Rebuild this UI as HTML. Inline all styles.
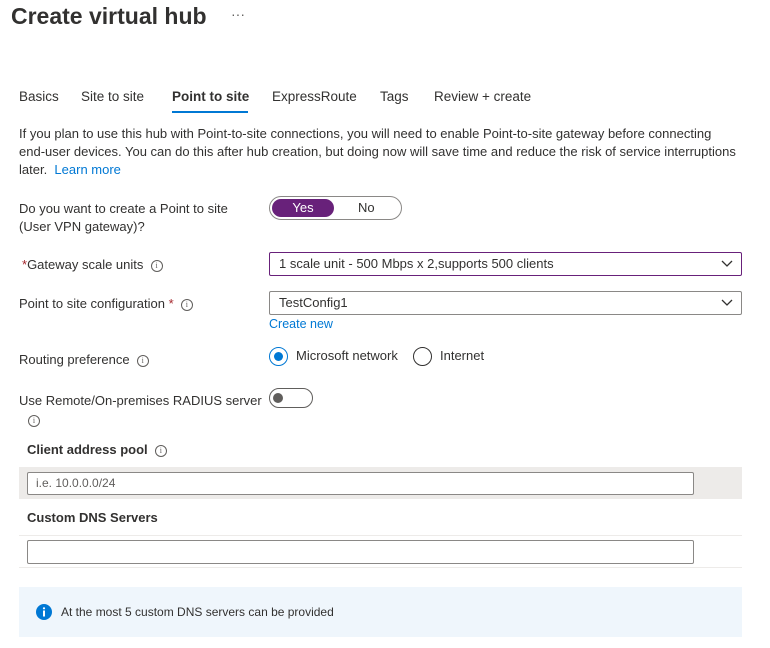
<!DOCTYPE html>
<html><head><style>
*{box-sizing:border-box;margin:0;padding:0}
body{width:770px;height:648px;background:#fff;font-family:"Segoe UI","Liberation Sans",sans-serif;color:#323130;font-size:13px;position:relative;overflow:hidden}
.a{position:absolute;white-space:nowrap}
.info{display:inline-block;width:12px;height:12px;border:1px solid #605e5c;border-radius:50%;font-size:8px;line-height:10px;text-align:center;color:#605e5c;font-family:"Liberation Serif",serif;vertical-align:middle}
.sel{position:absolute;border:1px solid #8a8886;height:24px;border-radius:2px;padding:0 9px;line-height:22px;font-size:13px}
.chev{position:absolute;right:8px;top:7px}
</style></head><body>
<div class="a" style="left:11px;top:3px;font-size:23px;font-weight:600;color:#323130">Create virtual hub</div>
<div class="a" style="left:231px;top:6px;font-size:14px;color:#605e5c">···</div>

<div class="a" style="left:19px;top:89px;font-size:13.5px">Basics</div>
<div class="a" style="left:81px;top:89px;font-size:13.5px">Site to site</div>
<div class="a" style="left:172px;top:89px;font-size:13.5px;font-weight:600">Point to site</div>
<div class="a" style="left:172px;top:111px;width:76px;height:2px;background:#0078d4"></div>
<div class="a" style="left:272px;top:89px;font-size:13.5px">ExpressRoute</div>
<div class="a" style="left:380px;top:89px;font-size:13.5px">Tags</div>
<div class="a" style="left:434px;top:89px;font-size:13.5px">Review + create</div>

<div class="a" style="left:19px;top:125px;font-size:13px;line-height:18px;white-space:normal;width:725px">If you plan to use this hub with Point-to-site connections, you will need to enable Point-to-site gateway before connecting end&#8209;user devices. You can do this after hub creation, but doing now will save time and reduce the risk of service interruptions later. &nbsp;<span style="color:#0078d4">Learn more</span></div>

<div class="a" style="left:19px;top:200px;line-height:18px">Do you want to create a Point to site<br>(User VPN gateway)?</div>
<div class="a" style="left:269px;top:196px;width:133px;height:24px;border:1px solid #8a8886;border-radius:12px"></div>
<div class="a" style="left:272px;top:199px;width:62px;height:18px;border-radius:9px;background:#68217a;color:#fff;text-align:center;line-height:18px">Yes</div>
<div class="a" style="left:358px;top:200px">No</div>

<div class="a" style="left:22px;top:257px"><span style="color:#a4262c">*</span>Gateway scale units &nbsp;<span class="info">i</span></div>
<div class="sel" style="left:269px;top:252px;width:473px;border-color:#68217a">1 scale unit - 500 Mbps x 2,supports 500 clients<svg class="chev" width="12" height="8" viewBox="0 0 12 8"><path d="M1 1l5 5 5-5" stroke="#323130" fill="none" stroke-width="1.3"/></svg></div>

<div class="a" style="left:19px;top:296px">Point to site configuration <span style="color:#a4262c">*</span> &nbsp;<span class="info">i</span></div>
<div class="sel" style="left:269px;top:291px;width:473px">TestConfig1<svg class="chev" width="12" height="8" viewBox="0 0 12 8"><path d="M1 1l5 5 5-5" stroke="#323130" fill="none" stroke-width="1.3"/></svg></div>
<div class="a" style="left:269px;top:317px;color:#0078d4;font-size:12.5px">Create new</div>

<div class="a" style="left:19px;top:352px">Routing preference &nbsp;<span class="info">i</span></div>
<div class="a" style="left:269px;top:347px;width:19px;height:19px;border:1px solid #0078d4;border-radius:50%"></div>
<div class="a" style="left:274px;top:352px;width:9px;height:9px;background:#0078d4;border-radius:50%"></div>
<div class="a" style="left:296px;top:348px">Microsoft network</div>
<div class="a" style="left:413px;top:347px;width:19px;height:19px;border:1px solid #323130;border-radius:50%"></div>
<div class="a" style="left:440px;top:348px">Internet</div>

<div class="a" style="left:19px;top:393px">Use Remote/On-premises RADIUS server</div>
<div class="a" style="left:28px;top:412px"><span class="info">i</span></div>
<div class="a" style="left:269px;top:388px;width:44px;height:20px;border:1px solid #605e5c;border-radius:10px"></div>
<div class="a" style="left:273px;top:393px;width:10px;height:10px;background:#605e5c;border-radius:50%"></div>

<div class="a" style="left:27px;top:442px;font-weight:600">Client address pool &nbsp;<span class="info" style="font-weight:400">i</span></div>
<div class="a" style="left:19px;top:467px;width:723px;height:32px;background:#edebe9"></div>
<div class="a" style="left:27px;top:472px;width:667px;height:23px;border:1px solid #8a8886;background:#fff;border-radius:2px;padding-left:8px;line-height:21px;font-size:12px;color:#605e5c">i.e. 10.0.0.0/24</div>

<div class="a" style="left:27px;top:510px;font-weight:600">Custom DNS Servers</div>
<div class="a" style="left:19px;top:535px;width:723px;height:1px;background:#edebe9"></div>
<div class="a" style="left:27px;top:540px;width:667px;height:24px;border:1px solid #8a8886;border-radius:2px"></div>
<div class="a" style="left:19px;top:567px;width:723px;height:1px;background:#edebe9"></div>

<div class="a" style="left:19px;top:587px;width:723px;height:50px;background:#eff6fc"></div>
<svg class="a" style="left:36px;top:604px" width="16" height="16" viewBox="0 0 16 16"><circle cx="8" cy="8" r="8" fill="#0078d4"/><rect x="7" y="6.5" width="2" height="6" fill="#fff"/><circle cx="8" cy="4.3" r="1.1" fill="#fff"/></svg>
<div class="a" style="left:61px;top:605px;font-size:12px">At the most 5 custom DNS servers can be provided</div>
</body></html>
